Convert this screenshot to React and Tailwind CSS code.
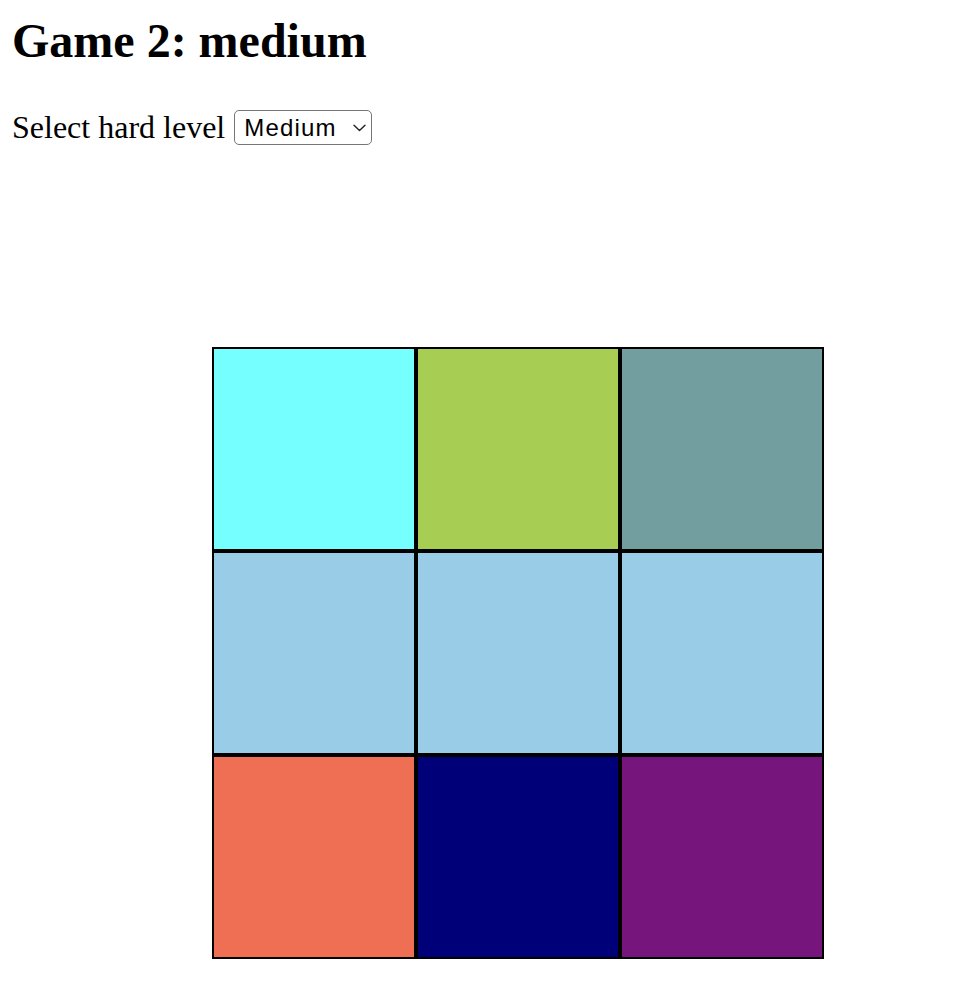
import React from "react";

const colors = [
  "bg-[#76ffff]",
  "bg-[#a8cd53]",
  "bg-[#729e9f]",
  "bg-[#98cce7]",
  "bg-[#98cce7]",
  "bg-[#98cce7]",
  "bg-[#ee6f53]",
  "bg-[#000078]",
  "bg-[#76157b]",
];

export default function App() {
  return (
    <div className="pl-[12px] text-black bg-white min-h-[1006px]" style={{ fontFamily: '"Liberation Serif", "Times New Roman", serif' }}>
      <h1 className="m-0 pt-[13px] text-[48px] leading-[56px] font-bold">Game 2: medium</h1>
      <div className="mt-[40px] flex items-center gap-[9px] h-[36px]">
        <span className="text-[32px] leading-[36px]">Select hard level</span>
        <div className="relative h-[35px] w-[138px]">
          <select
            defaultValue="medium"
            className="appearance-none h-full w-full rounded-[5px] border border-[#767676] bg-white pl-[9px] pr-[30px] text-[24px] leading-[33px] tracking-[1.2px] text-black outline-none"
            style={{ fontFamily: '"Liberation Sans", Arial, sans-serif' }}
          >
            <option value="easy">Easy</option>
            <option value="medium">Medium</option>
            <option value="hard">Hard</option>
          </select>
          <svg
            className="pointer-events-none absolute right-[6px] top-[14px]"
            width="13"
            height="8"
            viewBox="0 0 13 8"
            fill="none"
          >
            <path d="M1 1.2 L6.5 6.5 L12 1.2" stroke="#222" strokeWidth="1.4" strokeLinecap="round" strokeLinejoin="round" />
          </svg>
        </div>
      </div>
      <div className="mt-[202px] ml-[200px] grid grid-cols-[repeat(3,204px)] w-[612px]">
        {colors.map((c, i) => (
          <div key={i} className={`h-[204px] w-[204px] border-2 border-black ${c}`} />
        ))}
      </div>
    </div>
  );
}
